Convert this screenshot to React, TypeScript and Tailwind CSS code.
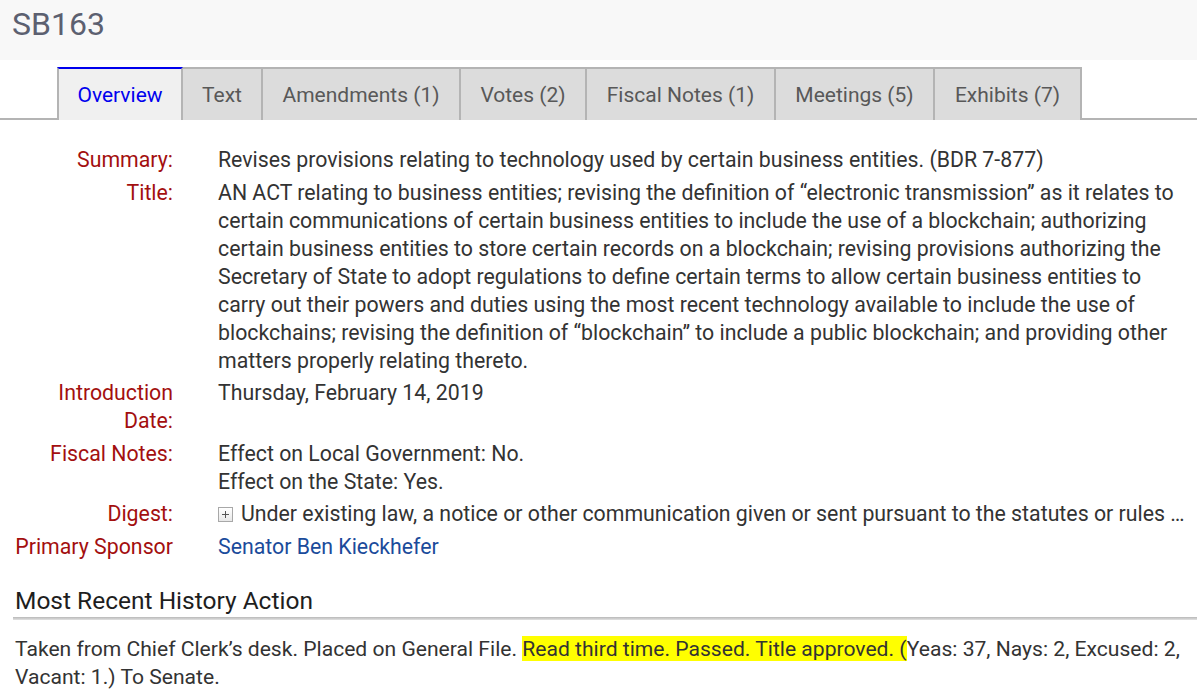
import React from "react";

const tabs = [
  { label: "Overview", w: "w-[126px]", active: true },
  { label: "Text", w: "w-[80px]" },
  { label: "Amendments (1)", w: "w-[198px]" },
  { label: "Votes (2)", w: "w-[126px]" },
  { label: "Fiscal Notes (1)", w: "w-[189px]" },
  { label: "Meetings (5)", w: "w-[159px]" },
  { label: "Exhibits (7)", w: "w-[147px]" },
];

function Row({ label, children }: { label: React.ReactNode; children: React.ReactNode }) {
  return (
    <>
      <div className="py-[2px] text-right text-[#a30f0f]">{label}</div>
      <div className="min-w-0 py-[2px] text-[#333]">{children}</div>
    </>
  );
}

function ExpandBox() {
  return (
    <span className="mr-[8px] inline-flex h-[15px] w-[15px] items-center justify-center border border-[#a8a8a8] bg-gradient-to-b from-white to-[#e8e8e8] align-middle -translate-y-[1px]">
      <svg width="9" height="9" viewBox="0 0 9 9">
        <path d="M4.5 1v7M1 4.5h7" stroke="#555" strokeWidth="1" />
      </svg>
    </span>
  );
}

export default function App() {
  return (
    <div className="h-[692px] w-[1197px] overflow-hidden bg-white font-['Roboto','Liberation_Sans',sans-serif]">
      <div className="h-[60px] bg-[#f8f8f8] px-[12px]">
        <h1 className="text-[32px] leading-[48px] text-[#5c6070]">SB163</h1>
      </div>

      {/* tab strip */}
      <div className="mt-[7px] flex border-b-2 border-[#b4b4b4] pl-[57px]">
        {tabs.map((t, i) => (
          <div
            key={t.label}
            className={
              t.w +
              " -mb-[2px] flex h-[53px] items-center justify-center border-t-2 border-r-2 pt-[3px] text-[21px] " +
              (i === 0 ? "border-l-2 " : "") +
              (t.active
                ? "border-t-[#0000ee] border-r-[#b4b4b4] border-l-[#b4b4b4] bg-[#f0f0f0] text-[#0000ee]"
                : "border-[#b4b4b4] bg-[#dcdcdc] text-[#585858]")
            }
          >
            {t.label}
          </div>
        ))}
      </div>

      <div className="mt-[24px] grid grid-cols-[160px_1fr] gap-x-[45px] gap-y-[0.5px] pl-[13px] pr-[10px] text-[21.3px] leading-[28px]">
        <Row label="Summary:">
          Revises provisions relating to technology used by certain business entities. (BDR 7-877)
        </Row>
        <Row label="Title:">
          AN ACT relating to business entities; revising the definition of “electronic transmission” as it relates to
          certain communications of certain business entities to include the use of a blockchain; authorizing certain
          business entities to store certain records on a blockchain; revising provisions authorizing the Secretary of
          State to adopt regulations to define certain terms to allow certain business entities to carry out their
          powers and duties using the most recent technology available to include the use of blockchains; revising the
          definition of “blockchain” to include a public blockchain; and providing other matters properly relating
          thereto.
        </Row>
        <Row label="Introduction Date:">Thursday, February 14, 2019</Row>
        <Row label="Fiscal Notes:">
          <div>Effect on Local Government: No.</div>
          <div>Effect on the State: Yes.</div>
        </Row>
        <Row label="Digest:">
          <div className="whitespace-nowrap">
            <ExpandBox />
            Under existing law, a notice or other communication given or sent pursuant to the statutes or rules …
          </div>
        </Row>
        <Row label="Primary Sponsor">
          <a className="text-[#1b4b9b]">Senator Ben Kieckhefer</a>
        </Row>
      </div>

      <h2 className="mt-[24px] pl-[15px] text-[24.5px] leading-[28px] text-[#1e1e1e]">Most Recent History Action</h2>
      <div className="ml-[13px] mt-[2px] h-[3px] bg-gradient-to-b from-[#b8b8b8] to-[#e2e2e2]" />

      <p className="mt-[15px] pl-[15px] text-[21.1px] leading-[28px] text-[#333]">
        Taken from Chief Clerk’s desk. Placed on General File.{" "}
        <span className="bg-[#ffff00]">Read third time. Passed. Title approved. (</span>Yeas: 37, Nays: 2, Excused:
        2, Vacant: 1.) To Senate.
      </p>
    </div>
  );
}
